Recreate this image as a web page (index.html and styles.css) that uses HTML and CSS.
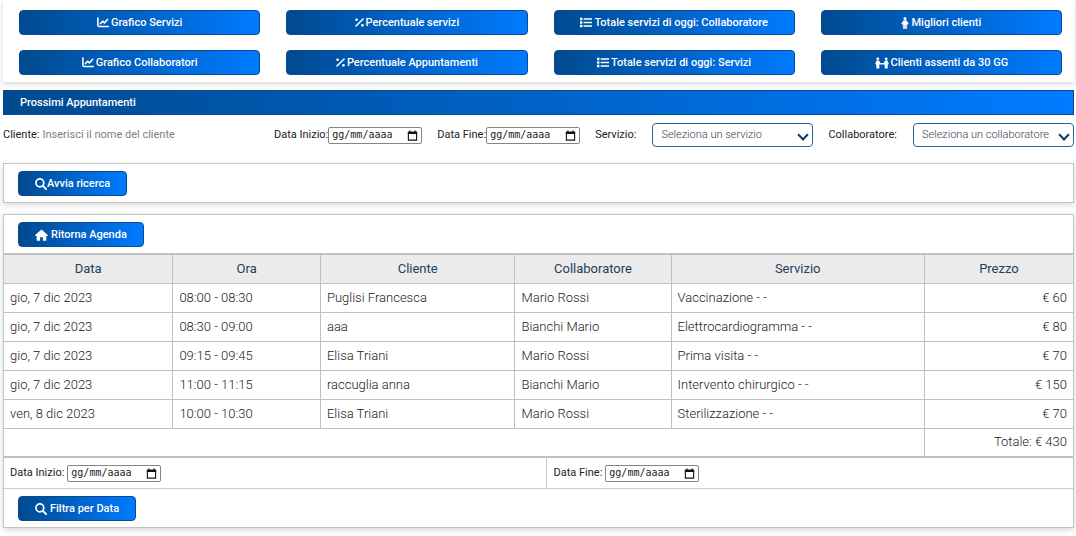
FILE: index.html
```html
<!DOCTYPE html>
<html lang="it">
<head>
<meta charset="utf-8">
<meta name="viewport" content="width=device-width, initial-scale=1">
<title>Prossimi Appuntamenti</title>
<link rel="stylesheet" href="styles.css">
</head>
<body>
<svg class="sprite" aria-hidden="true">
  <symbol id="i-chart" viewBox="0 0 16 14"><path d="M1.200 1v9.500q0 1.800 1.800 1.800h12" fill="none" stroke="currentColor" stroke-width="2.100" stroke-linecap="round"/><path d="M4.500 8.500 7.500 5.200l2.500 2.300L14.300 2.800" fill="none" stroke="currentColor" stroke-width="2" stroke-linecap="round" stroke-linejoin="round"/></symbol>
  <symbol id="i-percent" viewBox="0 0 12 12"><path d="M10.700 1.300l-9.400 9.400" stroke="currentColor" stroke-width="2" stroke-linecap="round"/><circle cx="2.100" cy="2.300" r="1.800" fill="currentColor"/><circle cx="9.900" cy="9.700" r="1.800" fill="currentColor"/></symbol>
  <symbol id="i-list" viewBox="0 0 16 14"><path d="M0 .8h3.200V4H0zM0 5.400h3.200v3.200H0zM0 10h3.200v3.200H0zM4.800 1.400H16v2H4.800zM4.800 6H16v2H4.800zM4.800 10.600H16v2H4.800z" fill="currentColor"/></symbol>
  <symbol id="i-person" viewBox="0 0 10 16"><circle cx="5" cy="2" r="2" fill="currentColor"/><path d="M3.300 4.500h3.400L9.600 9l-1.300 1-1-1.400V15.600H5.400V11h-.8v4.600H2.700V8.600L1.700 10 .4 9z" fill="currentColor" stroke="currentColor" stroke-width=".6" stroke-linejoin="round"/></symbol>
  <symbol id="i-people" viewBox="0 0 20 16"><circle cx="4" cy="2" r="2" fill="currentColor"/><circle cx="16" cy="2" r="2" fill="currentColor"/><path d="M2.200 4.500h3.600L7.500 8h5l1.700-3.500h3.600L19.700 9l-1.500 1.500v5.200h-4.400V10H6.200v5.700H1.800v-5.200L.3 9z" fill="currentColor"/></symbol>
  <symbol id="i-search" viewBox="0 0 16 16"><circle cx="6.500" cy="6.500" r="5.200" fill="none" stroke="currentColor" stroke-width="2.300"/><path d="M10.500 10.500l4.200 4.200" stroke="currentColor" stroke-width="2.600" stroke-linecap="round"/></symbol>
  <symbol id="i-home" viewBox="0 0 18 16"><path d="M9 .3 17.700 8q.3 1.300-1 1.300h-1V15q0 .8-.8.800H11V11H7v4.800H3.100q-.8 0-.8-.8V9.300h-1Q0 9.300.3 8z" fill="currentColor"/></symbol>
  <symbol id="i-calendar" viewBox="0 0 12 12"><path d="M1.500 2.500h9v8.500h-9z" fill="none" stroke="currentColor" stroke-width="1.200"/><path d="M1 2h10v2.400H1zM2.500.5h1.400V2H2.500zM8.100.5h1.400V2H8.100z" fill="currentColor"/></symbol>
</svg>

<nav class="panel reports">
  <button class="btn" type="button"><svg class="icon"><use href="#i-chart"/></svg>Grafico Servizi</button>
  <button class="btn" type="button"><svg class="icon icon-slim"><use href="#i-percent"/></svg>Percentuale servizi</button>
  <button class="btn" type="button"><svg class="icon"><use href="#i-list"/></svg>Totale servizi di oggi: Collaboratore</button>
  <button class="btn" type="button"><svg class="icon icon-thin"><use href="#i-person"/></svg>Migliori clienti</button>
  <button class="btn" type="button"><svg class="icon"><use href="#i-chart"/></svg>Grafico Collaboratori</button>
  <button class="btn" type="button"><svg class="icon icon-slim"><use href="#i-percent"/></svg>Percentuale Appuntamenti</button>
  <button class="btn" type="button"><svg class="icon"><use href="#i-list"/></svg>Totale servizi di oggi: Servizi</button>
  <button class="btn" type="button"><svg class="icon icon-wide"><use href="#i-people"/></svg>Clienti assenti da 30 GG</button>
</nav>

<h1 class="title">Prossimi Appuntamenti</h1>

<form class="filters">
  <div class="field field-client"><label for="cliente">Cliente:</label><input class="client" id="cliente" type="text" placeholder="Inserisci il nome del cliente"></div>
  <div class="field"><label for="inizio">Data Inizio:</label><span class="date"><input id="inizio" type="text" placeholder="gg/mm/aaaa"><svg class="cal"><use href="#i-calendar"/></svg></span></div>
  <div class="field"><label for="fine">Data Fine:</label><span class="date"><input id="fine" type="text" placeholder="gg/mm/aaaa"><svg class="cal"><use href="#i-calendar"/></svg></span></div>
  <div class="field field-select"><label for="servizio">Servizio:</label><span class="select"><select id="servizio"><option>Seleziona un servizio</option></select></span></div>
  <div class="field field-select"><label for="collab">Collaboratore:</label><span class="select"><select id="collab"><option>Seleziona un collaboratore</option></select></span></div>
</form>

<section class="panel boxed">
  <div class="actions"><button class="btn btn-tight" type="button"><svg class="icon icon-search"><use href="#i-search"/></svg>Avvia ricerca</button></div>
</section>

<section class="panel boxed">
  <div class="actions"><button class="btn btn-spaced" type="button"><svg class="icon icon-home"><use href="#i-home"/></svg>Ritorna Agenda</button></div>
  <table class="agenda">
    <colgroup><col class="c-date"><col class="c-time"><col class="c-client"><col class="c-staff"><col class="c-service"><col class="c-price"></colgroup>
    <thead><tr><th>Data</th><th>Ora</th><th>Cliente</th><th>Collaboratore</th><th>Servizio</th><th>Prezzo</th></tr></thead>
    <tbody>
      <tr><td>gio, 7 dic 2023</td><td>08:00 - 08:30</td><td>Puglisi Francesca</td><td>Mario Rossi</td><td>Vaccinazione - -</td><td class="num">€ 60</td></tr>
      <tr><td>gio, 7 dic 2023</td><td>08:30 - 09:00</td><td>aaa</td><td>Bianchi Mario</td><td>Elettrocardiogramma - -</td><td class="num">€ 80</td></tr>
      <tr><td>gio, 7 dic 2023</td><td>09:15 - 09:45</td><td>Elisa Triani</td><td>Mario Rossi</td><td>Prima visita - -</td><td class="num">€ 70</td></tr>
      <tr><td>gio, 7 dic 2023</td><td>11:00 - 11:15</td><td>raccuglia anna</td><td>Bianchi Mario</td><td>Intervento chirurgico - -</td><td class="num">€ 150</td></tr>
      <tr><td>ven, 8 dic 2023</td><td>10:00 - 10:30</td><td>Elisa Triani</td><td>Mario Rossi</td><td>Sterilizzazione - -</td><td class="num">€ 70</td></tr>
    </tbody>
    <tfoot><tr><td colspan="5"></td><td class="num">Totale: € 430</td></tr></tfoot>
  </table>
  <div class="range">
    <div class="field"><label for="da">Data Inizio:</label><span class="date"><input id="da" type="text" placeholder="gg/mm/aaaa"><svg class="cal"><use href="#i-calendar"/></svg></span></div>
    <div class="field"><label for="al">Data Fine:</label><span class="date"><input id="al" type="text" placeholder="gg/mm/aaaa"><svg class="cal"><use href="#i-calendar"/></svg></span></div>
  </div>
  <div class="actions"><button class="btn btn-spaced" type="button"><svg class="icon icon-search"><use href="#i-search"/></svg>Filtra per Data</button></div>
</section>
</body>
</html>
```
FILE: styles.css
```css
* { box-sizing: border-box; }
body {
  margin: 0;
  padding: 0 2px 0 3px;
  background: #fff;
  color: #222;
  font: 11px/16px Roboto, "Liberation Sans", sans-serif;
}
.sprite { position: absolute; width: 0; height: 0; }
button, input, select { font: inherit; color: inherit; margin: 0; }

.panel { background: #fff; box-shadow: 0 2px 6px rgba(0, 0, 0, .16); }
.boxed { border: 1px solid #c4c4c4; margin-bottom: 11px; }

.reports {
  display: grid;
  grid-template-columns: repeat(4, 1fr);
  gap: 15px 26px;
  padding: 10px 12px 7px 16px;
  margin-bottom: 8px;
}
.btn {
  display: inline-flex;
  align-items: center;
  justify-content: center;
  gap: 2px;
  height: 25px;
  padding: 0 16px;
  border: 1px solid #0a4a90;
  border-radius: 4px;
  background: linear-gradient(to right, #004a8f, #007bff);
  color: #fff;
  font-weight: 500;
  white-space: nowrap;
}
.btn-spaced { gap: 3px; }
.btn-tight { gap: 0; }
.icon { width: 12px; height: 11px; flex: none; }
.icon-slim { width: 9px; }
.icon-thin { width: 8px; height: 12px; }
.icon-wide { width: 14px; height: 12px; }
.icon-search { width: 12px; height: 12px; }
.icon-home { width: 13px; height: 12px; }

.title {
  margin: 0;
  height: 25px;
  padding: 0 16px;
  border: 1px solid #0a4a90;
  background: linear-gradient(to right, #004a8f, #007bff);
  color: #fff;
  font-size: 11px;
  font-weight: 500;
  line-height: 23px;
}

.filters {
  display: flex;
  align-items: center;
  gap: 15px;
  padding: 8px 0 16px;
}
.field { display: flex; align-items: center; white-space: nowrap; }
.field-client { flex: 1; gap: 3px; }
.field-select { gap: 16px; }
.client { flex: 1; min-width: 0; border: 0; padding: 0; background: none; outline: 0; }
.client::placeholder { color: #808080; opacity: 1; }
.date {
  display: inline-flex;
  align-items: center;
  width: 94px;
  height: 17px;
  padding: 0 3px;
  border: 1px solid #858585;
  border-radius: 2px;
  background: #fff;
}
.date input {
  flex: 1;
  min-width: 0;
  border: 0;
  padding: 0;
  background: none;
  outline: 0;
  font: 10px/14px "DejaVu Sans Mono", monospace;
}
.date input::placeholder { color: #222; opacity: 1; }
.cal { width: 11px; height: 11px; flex: none; color: #111; }
.select { position: relative; display: inline-flex; width: 161px; }
.select select {
  appearance: none;
  width: 100%;
  height: 24px;
  padding: 0 14px 0 8px;
  border: 1px solid #2f6690;
  border-radius: 4px;
  background: #fff;
  color: #345;
  font-weight: 300;
}
.select::after {
  content: "";
  position: absolute;
  right: 6px;
  top: 8px;
  width: 6px;
  height: 6px;
  border: solid #123a66;
  border-width: 0 2px 2px 0;
  transform: rotate(45deg);
  pointer-events: none;
}

.actions { padding: 7px 14px 6px; display: flex; }

.agenda {
  width: 100%;
  table-layout: fixed;
  border-collapse: collapse;
  border-top: 2px solid #c0c0c0;
  border-bottom: 2px solid #c0c0c0;
  font-size: 13px;
}
.c-date { width: 15.8%; }
.c-time { width: 13.8%; }
.c-client { width: 18.2%; }
.c-staff { width: 14.6%; }
.c-service { width: 23.7%; }
.c-price { width: 13.9%; }
.agenda th, .agenda td {
  height: 29px;
  padding: 0 6px;
  border: 1px solid #c0c0c0;
  font-weight: 300;
  line-height: 16px;
}
.agenda th { background: #ebebeb; color: #23405f; font-weight: 400; }
.agenda tr > :first-child { border-left: 0; }
.agenda tr > :last-child { border-right: 0; }
.agenda .num { text-align: right; }

.range { display: grid; grid-template-columns: 543fr 527fr; border-bottom: 1px solid #ccc; }
.range .field { height: 30px; padding: 0 6px; gap: 3px; }
.range .field + .field { border-left: 1px solid #ccc; }
```
